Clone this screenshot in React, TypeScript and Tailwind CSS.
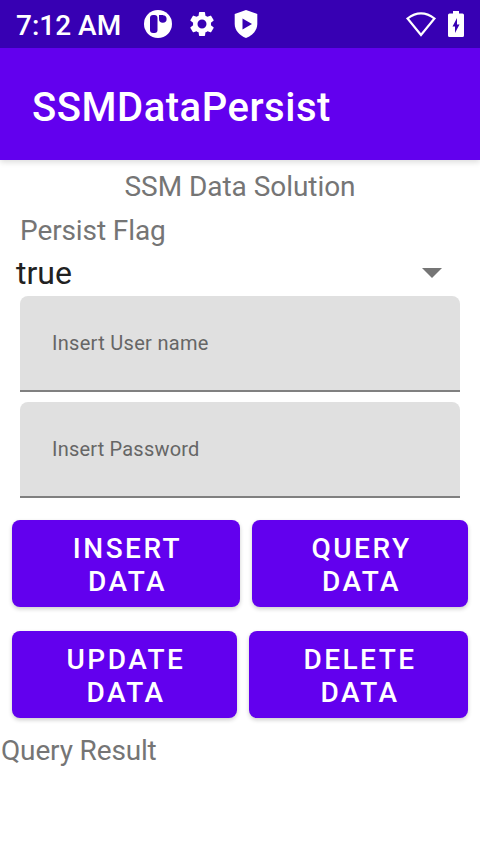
import React from "react";

function Field({ label, tracking }: { label: string; tracking: string }) {
  return (
    <div className={`${tracking} flex h-24 items-center rounded-t-lg border-b-2 border-[#808080] bg-[#e0e0e0] pl-8 text-[20px] text-[#666666]`}>
      {label}
    </div>
  );
}

function Button({ a, b, w }: { a: string; b: string; w: string }) {
  return (
    <button className={`${w} h-[87px] rounded-lg bg-[#6200ee] pt-[3px] pl-[3px] text-center text-[28px] leading-[33px] font-medium tracking-[2.5px] text-white shadow-[0_2px_4px_rgba(0,0,0,0.2)]`}>
      <span className="block">{a}</span>
      <span className="block">{b}</span>
    </button>
  );
}

export default function App() {
  return (
    <div className="flex h-[854px] w-[480px] flex-col overflow-hidden bg-white font-['Roboto',sans-serif] text-[#757575]">
      <div className="z-20 flex h-12 shrink-0 items-center bg-[#3700b3] text-white">
        <span className="ml-4 w-[127px] pt-[3px] text-[28px] font-medium whitespace-nowrap">7:12 AM</span>
        <svg width="30" height="30" viewBox="0 0 30 30">
          <circle cx="15" cy="15" r="14" fill="#fff" />
          <rect x="7" y="6" width="7.5" height="18" rx="3" fill="#3700b3" />
          <circle cx="19.8" cy="10" r="3.8" fill="#3700b3" />
          <path d="M16 6h4v4h-4z" fill="#3700b3" />
        </svg>
        <svg className="ml-3.5" width="30" height="30" viewBox="0 0 24 24" fill="#fff"><path d="M19.14 12.94c.04-.3.06-.61.06-.94s-.02-.64-.07-.94l2.03-1.58a.49.49 0 0 0 .12-.61l-1.92-3.32a.49.49 0 0 0-.59-.22l-2.39.96a7 7 0 0 0-1.62-.94l-.36-2.54a.48.48 0 0 0-.48-.41h-3.84a.47.47 0 0 0-.47.41l-.36 2.54c-.59.24-1.13.57-1.62.94l-2.39-.96a.47.47 0 0 0-.59.22L2.74 8.87a.47.47 0 0 0 .12.61l2.03 1.58a6 6 0 0 0 0 1.88l-2.03 1.58a.49.49 0 0 0-.12.61l1.92 3.32c.12.22.37.29.59.22l2.39-.96c.5.38 1.03.7 1.62.94l.36 2.54c.05.24.24.41.48.41h3.84c.24 0 .44-.17.47-.41l.36-2.54a7 7 0 0 0 1.62-.94l2.39.96c.22.08.47 0 .59-.22l1.92-3.32a.47.47 0 0 0-.12-.61zM12 15.6a3.6 3.6 0 1 1 0-7.2 3.6 3.6 0 0 1 0 7.2z" /></svg>
        <svg className="ml-3.5" width="30" height="30" viewBox="0 0 30 30">
          <path d="M15 1 26.3 5V15c0 6-4.5 11.500-11.300 14C8.200 26.500 3.700 21 3.700 15V5z" fill="#fff" />
          <path d="M11.500 9.500v11l9.500-5.500z" fill="#3700b3" />
        </svg>
        <svg className="ml-auto" width="32" height="28" viewBox="0 0 32 28">
          <path d="M2.500 8.500Q16-1.800 29.500 8.500L16 25z" fill="none" stroke="#fff" strokeWidth="2.200" />
        </svg>
        <svg className="mr-4 ml-[11px]" width="16" height="28" viewBox="0 0 16 28">
          <path d="M5 1h6v2.500h3.500Q16 3.500 16 5v20.500Q16 27 14.500 27h-13Q0 27 0 25.500V5Q0 3.500 1.500 3.500H5z" fill="#fff" />
          <path d="M9 8 4.500 16.500H7V23l4.500-8.500H9z" fill="#3700b3" />
        </svg>
      </div>
      <div className="z-10 flex h-28 shrink-0 items-center bg-[#6200ee] pt-2 pl-8 text-[40px] font-medium tracking-[0.53px] text-white shadow-[0_2px_6px_rgba(0,0,0,0.15)]">SSMDataPersist</div>
      <div className="mt-2.5 text-center text-[28px] leading-[33px] tracking-[-0.05px]">SSM Data Solution</div>
      <div className="mt-[11px] pl-5 text-[28px] leading-[33px] tracking-[-0.1px]">Persist Flag</div>
      <div className="mt-1 mb-0.5 flex h-[43px] items-center justify-between pr-[38px] pl-4 text-[32px] text-[#212121]"><span>true</span><svg width="20" height="10"><path d="M0 0h20L10 10z" fill="#757575" /></svg></div>
      <div className="flex flex-col gap-2.5 px-5"><Field label="Insert User name" tracking="tracking-[0.3px]" /><Field label="Insert Password" tracking="tracking-[0.2px]" /></div>
      <div className="mt-[22px] flex gap-3 px-3"><Button a="INSERT" b="DATA" w="w-[228px]" /><Button a="QUERY" b="DATA" w="w-[216px]" /></div>
      <div className="mt-6 flex gap-3 px-3"><Button a="UPDATE" b="DATA" w="w-[225px]" /><Button a="DELETE" b="DATA" w="w-[219px]" /></div>
      <div className="mt-4 pl-px text-[28px] leading-[33px] tracking-[-0.15px]">Query Result</div>
    </div>
  );
}
